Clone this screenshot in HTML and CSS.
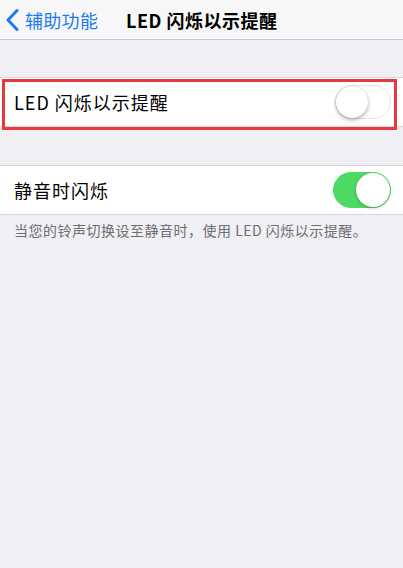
FILE: index.html
```html
<!DOCTYPE html>
<html lang="zh-CN">
<head>
    <meta charset="UTF-8">
    <meta name="viewport" content="width=device-width, initial-scale=1.0">
    <title>LED 闪烁以示提醒</title>
    <link rel="stylesheet" href="styles.css">
</head>
<body>
    <!-- 导航栏 -->
    <div class="nav">
        <div class="back">
            <svg class="chevron" width="14" height="24" viewBox="0 0 14 24">
                <path d="M12 2.5 L3 12 L12 21.5" fill="none" stroke="#1b7cf0" stroke-width="3" stroke-linecap="round" stroke-linejoin="round"/>
            </svg>
            <span>辅助功能</span>
        </div>
        <div class="title">LED 闪烁以示提醒</div>
    </div>

    <div class="group first">
        <div class="cell marked">
            <span class="label">LED 闪烁以示提醒</span>
            <div class="switch"><div class="knob"></div></div>
        </div>
    </div>

    <div class="group second">
        <div class="cell">
            <span class="label">静音时闪烁</span>
            <div class="switch on"><div class="knob"></div></div>
        </div>
    </div>
    <p class="footnote">当您的铃声切换设至静音时，使用 LED 闪烁以示提醒。</p>
</body>
</html>
```

FILE: styles.css
```css
body {
    margin: 0;
    background-color: #efeff4;
    font-family: "Noto Sans CJK SC", "Noto Sans", sans-serif;
    color: #000;
}

.nav {
    height: 39px;
    background-color: #f7f7f8;
    border-bottom: 1px solid #c8c7cc;
    display: flex;
    align-items: center;
}

.back {
    display: flex;
    align-items: center;
    gap: 6px;
    padding-left: 5px;
    color: #1b7cf0;
    font-size: 18px;
    letter-spacing: 0.3px;
    width: 121px;
}

.title {
    font-size: 18px;
    font-weight: bold;
    letter-spacing: 0.5px;
}

.group {
    background-color: #fff;
    border-top: 1px solid #d6d6da;
    border-bottom: 1px solid #d6d6da;
}

.group.first {
    margin-top: 37px;
}

.group.second {
    margin-top: 38px;
}

.cell {
    height: 48px;
    display: flex;
    align-items: center;
    justify-content: space-between;
    padding: 0 12px 0 14px;
    position: relative;
}

.cell.marked::after {
    content: "";
    position: absolute;
    left: 2px;
    top: 1px;
    width: 389px;
    height: 45px;
    border: 3px solid #e8383d;
}

.label {
    font-size: 18px;
    letter-spacing: 1px;
}

.switch {
    width: 54px;
    height: 32px;
    border-radius: 17px;
    border: 1px solid #e3e3e6;
    background-color: #fff;
    position: relative;
}

.knob {
    position: absolute;
    left: 0;
    top: 0;
    width: 32px;
    height: 32px;
    border-radius: 50%;
    background-color: #fff;
    box-shadow: 0 2px 4px rgba(0, 0, 0, 0.3), 0 0 1px rgba(0, 0, 0, 0.2);
}

.switch.on {
    width: 56px;
    height: 34px;
    background-color: #4cd964;
    border-color: #4cd964;
    border-radius: 18px;
}

.switch.on .knob {
    left: auto;
    right: 0;
    width: 34px;
    height: 34px;
    box-shadow: 0 1px 3px rgba(0, 0, 0, 0.3);
}

.footnote {
    margin: 6px 0 0;
    padding-left: 14px;
    font-size: 14px;
    line-height: 18px;
    letter-spacing: 0.5px;
    color: #6d6d72;
}
```
